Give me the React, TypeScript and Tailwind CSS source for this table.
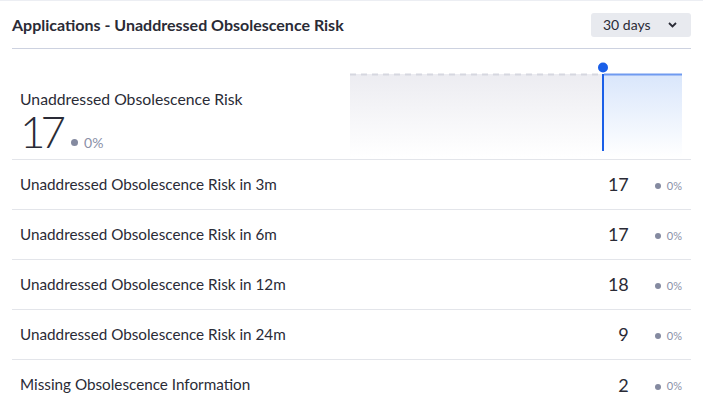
const rows = [
  { label: "Unaddressed Obsolescence Risk in 3m", value: 17 },
  { label: "Unaddressed Obsolescence Risk in 6m", value: 17 },
  { label: "Unaddressed Obsolescence Risk in 12m", value: 18 },
  { label: "Unaddressed Obsolescence Risk in 24m", value: 9 },
  { label: "Missing Obsolescence Information", value: 2 },
];

function Chart() {
  return (
    <svg width="332" height="96" viewBox="0 0 332 96" className="block">
      <defs>
        <linearGradient id="grayFill" x1="0" y1="0" x2="0" y2="1">
          <stop offset="0%" stopColor="#ececf1" />
          <stop offset="100%" stopColor="#ffffff" />
        </linearGradient>
        <linearGradient id="blueFill" x1="0" y1="0" x2="0" y2="1">
          <stop offset="0%" stopColor="#d9e6fb" />
          <stop offset="100%" stopColor="#ffffff" />
        </linearGradient>
      </defs>
      <rect x="0" y="13" width="253" height="83" fill="url(#grayFill)" />
      <rect x="254" y="13" width="78" height="83" fill="url(#blueFill)" />
      <line x1="0" y1="13.5" x2="252" y2="13.5" stroke="#d6d7e0" strokeWidth="2" strokeDasharray="6 5" />
      <line x1="254" y1="13.5" x2="332" y2="13.5" stroke="#6f9af0" strokeWidth="2" />
      <line x1="253" y1="13" x2="253" y2="90" stroke="#1a5fe8" strokeWidth="2" />
      <circle cx="253" cy="6.5" r="5" fill="#1a5fe8" />
    </svg>
  );
}

function Delta({ size = "sm" }: { size?: "sm" | "lg" }) {
  return (
    <span className={`flex items-center gap-[6px] text-[#8a90a8] ${size === "lg" ? "text-[14px]" : "text-[11px]"}`}>
      <span className={`rounded-full bg-[#848aa0] ${size === "lg" ? "h-[7px] w-[7px]" : "h-[6px] w-[6px]"}`} />
      0%
    </span>
  );
}

export default function App() {
  return (
    <div
      className="h-[403px] w-[703px] overflow-hidden border-t border-[#eceef3] bg-white text-[#2a2b36]"
      style={{ fontFamily: "Lato, 'Open Sans', sans-serif" }}
    >
      <div className="mx-3 flex h-[48px] items-center justify-between border-b border-[#cdd2e0]">
        <h2 className="text-[16px] font-bold text-[#2a2b36]">
          Applications - Unaddressed Obsolescence Risk
        </h2>
        <button className="flex h-[24px] w-[100px] items-center justify-between rounded-[3px] bg-[#e8eaef] pl-[12px] pr-[14px] text-[14px] text-[#2a2b36]">
          30 days
          <svg width="9" height="6" viewBox="0 0 9 6">
            <path d="M1 1l3.5 3.5L8 1" stroke="#2a2b36" strokeWidth="1.8" fill="none" />
          </svg>
        </button>
      </div>

      <div className="mx-3 flex h-[111px] items-start justify-between border-b border-[#e3e5ea]">
        <div className="pl-2 pt-[41px]">
          <p className="text-[15.75px] leading-[18px]">Unaddressed Obsolescence Risk</p>
          <div className="flex items-end gap-[10px]">
            <span className="text-[44px] font-light leading-[46px] tracking-[-5px]">17</span>
            <span className="pb-[1px]">
              <Delta size="lg" />
            </span>
          </div>
        </div>
        <div className="mr-[9px] pt-[12px]">
          <Chart />
        </div>
      </div>

      {rows.map((row) => (
        <div
          key={row.label}
          className="mx-3 flex h-[50px] items-center justify-between border-b border-[#e3e5ea] pl-2 last:border-b-0"
        >
          <span className="pb-[1px] text-[15.25px]">{row.label}</span>
          <div className="flex items-center">
            <span className="text-[18px]">{row.value}</span>
            <span className="ml-[26px] mr-[9px] pt-[3px]">
              <Delta />
            </span>
          </div>
        </div>
      ))}
    </div>
  );
}
